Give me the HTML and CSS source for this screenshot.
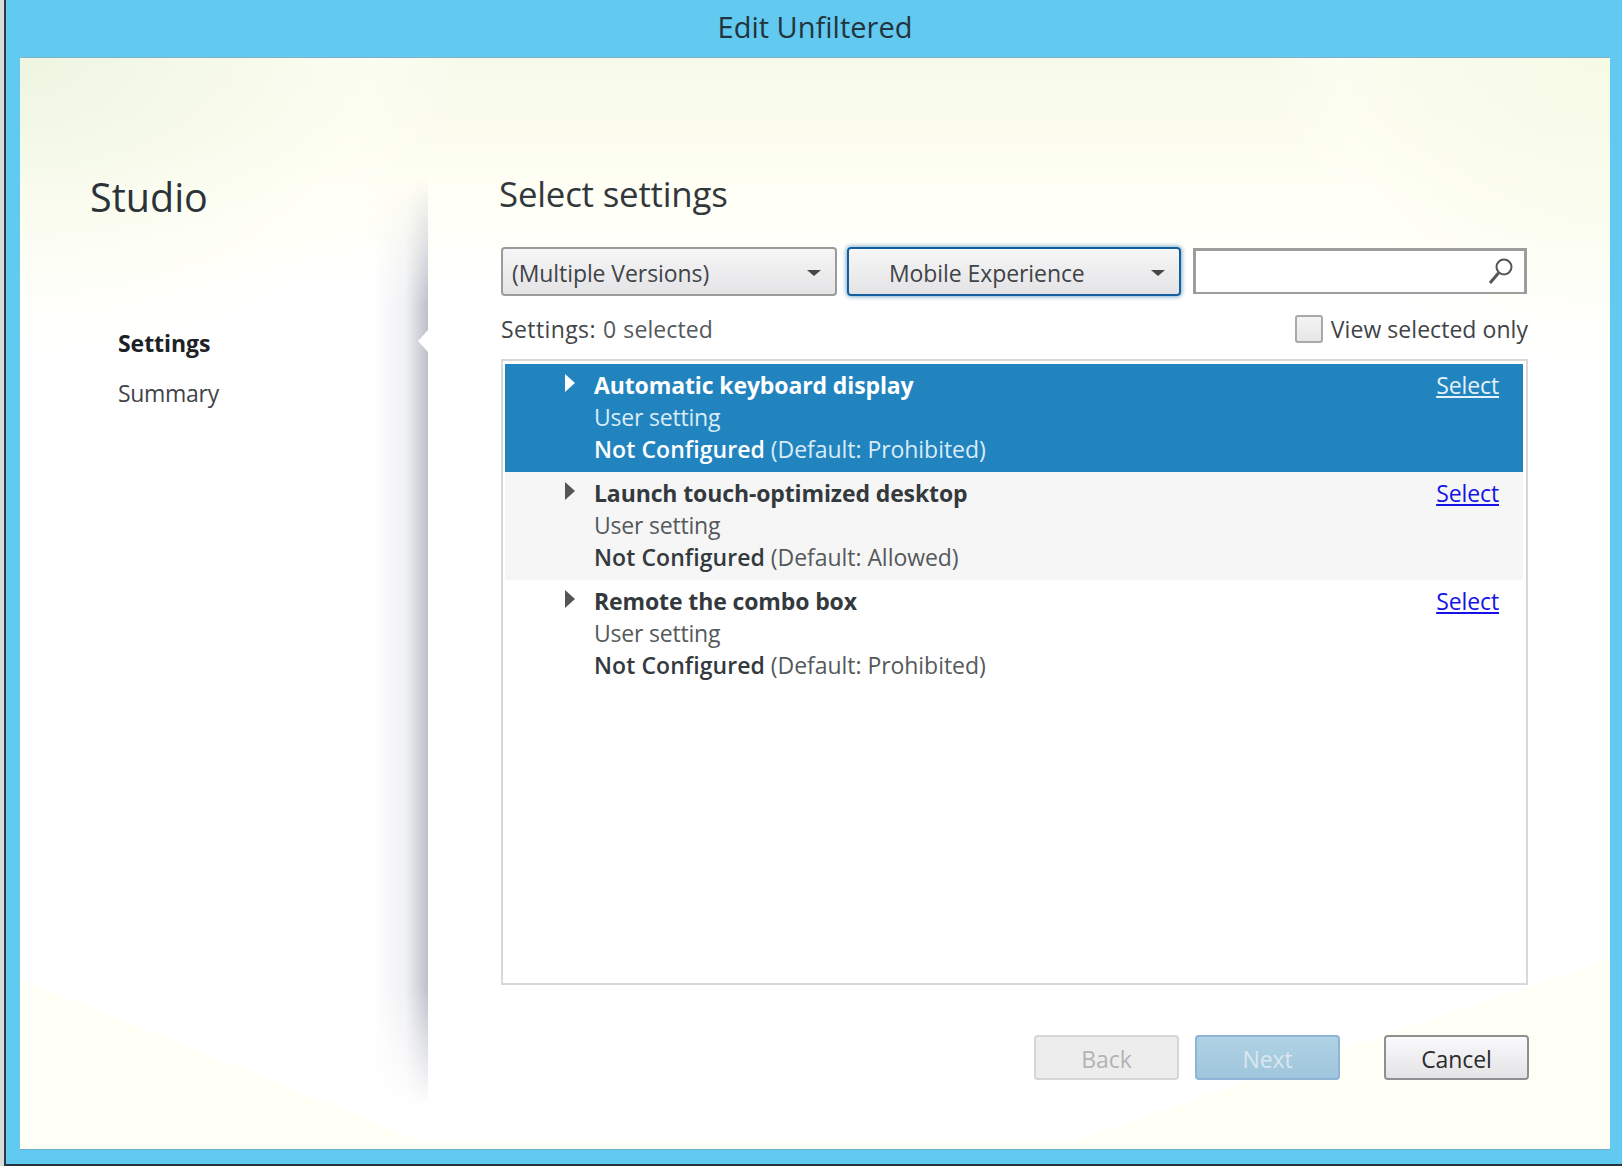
FILE: index.html
```html
<!DOCTYPE html>
<html lang="en">
  <head>
    <meta charset="UTF-8" />
    <title>Edit Unfiltered</title>
    <link rel="stylesheet" href="styles.css">
  </head>
  <body>
    <div class="window">
      <!-- Title bar -->
      <div class="title-bar">Edit Unfiltered</div>

      <div class="client">
        <!-- Left navigation -->
        <div class="sidebar">
          <h1>Studio</h1>
          <div class="nav-item active">Settings</div>
          <div class="nav-item">Summary</div>
          <div class="sidebar-shadow"></div>
          <div class="sidebar-notch"></div>
        </div>

        <!-- Wizard page -->
        <div class="page">
          <h2>Select settings</h2>

          <div class="filters">
            <div class="combo combo-version">
              <span>(Multiple Versions)</span>
              <i class="caret"></i>
            </div>
            <div class="combo combo-category">
              <span>Mobile Experience</span>
              <i class="caret"></i>
            </div>
            <div class="search">
              <svg width="30" height="30" viewBox="0 0 30 30">
                <circle cx="18" cy="11" r="7.5" fill="none" stroke="#555" stroke-width="2" />
                <path d="M12.5 17 L4 27" stroke="#555" stroke-width="3" fill="none" />
              </svg>
            </div>
          </div>

          <div class="status-row">
            <div class="count"><span class="count-label">Settings:</span> 0 selected</div>
            <label class="view-only"><span class="checkbox"></span>View selected only</label>
          </div>

          <div class="list">
            <div class="row selected">
              <i class="expander"></i>
              <div class="row-text">
                <div class="row-title">Automatic keyboard display</div>
                <div>User setting</div>
                <div class="row-value"><span class="row-state">Not Configured</span> (Default: Prohibited)</div>
              </div>
              <a class="select-link" href="#">Select</a>
            </div>
            <div class="row striped">
              <i class="expander"></i>
              <div class="row-text">
                <div class="row-title">Launch touch-optimized desktop</div>
                <div>User setting</div>
                <div class="row-value"><span class="row-state">Not Configured</span> (Default: Allowed)</div>
              </div>
              <a class="select-link" href="#">Select</a>
            </div>
            <div class="row">
              <i class="expander"></i>
              <div class="row-text">
                <div class="row-title">Remote the combo box</div>
                <div>User setting</div>
                <div class="row-value"><span class="row-state">Not Configured</span> (Default: Prohibited)</div>
              </div>
              <a class="select-link" href="#">Select</a>
            </div>
          </div>

          <div class="buttons">
            <button class="btn btn-back">Back</button>
            <button class="btn btn-next">Next</button>
            <button class="btn btn-cancel">Cancel</button>
          </div>
        </div>
      </div>
    </div>
  </body>
</html>
```

FILE: styles.css
```css
* {
  margin: 0;
  padding: 0;
  box-sizing: border-box;
}

html,
body {
  height: 100%;
}

body {
  font-family: "Open Sans", "Noto Sans", sans-serif;
  background: #d9dadc;
  padding-left: 4px;
  overflow: hidden;
  color: #3a3a3a;
}

.window {
  height: 1166px;
  display: flex;
  flex-direction: column;
  background: #62c9f0;
  border-left: 2px solid #2e3a40;
  border-bottom: 2px solid #24323a;
  padding: 0 12px 14px 14px;
}

/* Title bar */
.title-bar {
  height: 57px;
  flex: none;
  text-align: center;
  font-size: 29px;
  line-height: 54px;
  color: #23343c;
}

.client {
  flex: 1;
  display: flex;
  min-height: 0;
  border-top: 1px solid #7fb0c6;
  border-bottom: 1px solid #6eaccb;
  background-color: #fff;
  background-image:
    linear-gradient(to top right, #fffff6 50%, transparent 50.2%),
    linear-gradient(to top left, #fffff6 50%, transparent 50.2%),
    linear-gradient(to top, #fffff6 0, #fffff6 6px, transparent 7px),
    radial-gradient(ellipse 440px 300px at 0 0, rgba(236, 245, 224, 0.9) 0, rgba(246, 250, 234, 0.6) 50%, rgba(255, 255, 245, 0.6) 80%, rgba(255, 255, 245, 0) 100%),
    radial-gradient(ellipse 340px 310px at 100% 0, rgba(245, 250, 228, 0.8) 0, rgba(250, 252, 236, 0.6) 55%, rgba(255, 255, 245, 0.6) 80%, rgba(255, 255, 245, 0) 100%),
    linear-gradient(to bottom, #f7faeb 0, #fbfcee 70px, #fffff5 130px, #fffff8 170px, #fff 225px);
  background-size: 420px 170px, 560px 190px, 100% 100%, 100% 100%, 100% 100%, 100% 100%;
  background-position: 0 100%, 100% 100%, 0 0, 0 0, 0 0, 0 0;
  background-repeat: no-repeat;
}

/* Left navigation */
.sidebar {
  position: relative;
  width: 408px;
  flex: none;
  padding: 113px 0 0 70px;
}

.sidebar h1 {
  font-size: 39.5px;
  font-weight: 400;
  line-height: 52px;
  color: #2b3338;
  margin-bottom: 95px;
}

.nav-item {
  margin-left: 28px;
  font-size: 23px;
  line-height: 50px;
  color: #3f4448;
  letter-spacing: -0.3px;
}

.nav-item.active {
  font-weight: 700;
  color: #1c2226;
  letter-spacing: -0.05px;
}

.sidebar-shadow {
  position: absolute;
  top: 118px;
  right: 0;
  bottom: 42px;
  width: 56px;
  background: linear-gradient(to right, rgba(170, 175, 190, 0), rgba(170, 175, 190, 0.18) 60%, #bcc0c9 100%);
  -webkit-mask-image: linear-gradient(to bottom, transparent 0, #000 130px, #000 calc(100% - 120px), transparent 100%);
  mask-image: linear-gradient(to bottom, transparent 0, #000 130px, #000 calc(100% - 120px), transparent 100%);
}

.sidebar-notch {
  position: absolute;
  top: 272px;
  right: 0;
  border-top: 11px solid transparent;
  border-bottom: 11px solid transparent;
  border-right: 10px solid #fff;
}

/* Wizard page */
.page {
  flex: 1;
  padding: 0 82px 0 73px;
  display: flex;
  flex-direction: column;
}

.page h2 {
  margin-top: 111px;
  margin-left: -2px;
  font-size: 34.8px;
  font-weight: 400;
  line-height: 50px;
  color: #31383c;
  letter-spacing: -0.2px;
}

.filters {
  display: flex;
  margin-top: 28px;
  align-items: center;
}

.combo {
  height: 49px;
  display: flex;
  align-items: center;
  border: 2px solid #9b9b9b;
  border-radius: 4px;
  padding-top: 2px;
  background: linear-gradient(to bottom, #f6f6f7, #e4e4e6);
  font-size: 23px;
  color: #3f4448;
  letter-spacing: -0.08px;
  position: relative;
}

.combo-version {
  width: 336px;
  padding-left: 9px;
}

.combo-category {
  width: 334px;
  margin-left: 10px;
  padding-left: 40px;
  border-color: #14609f;
  box-shadow: 0 0 4px 1px #7eaecb;
}

.caret {
  position: absolute;
  right: 14px;
  top: 21px;
  border-left: 7px solid transparent;
  border-right: 7px solid transparent;
  border-top: 6px solid #454545;
}

.search {
  width: 334px;
  height: 46px;
  margin-left: 12px;
  margin-bottom: 2px;
  display: flex;
  align-items: center;
  justify-content: flex-end;
  padding-right: 8px;
  border: 3px solid #9d9d9d;
  border-bottom-width: 2px;
  background: #fff;
}

.status-row {
  display: flex;
  justify-content: space-between;
  align-items: center;
  height: 63px;
  padding-top: 2px;
  font-size: 23px;
  color: #54595c;
  letter-spacing: 0.1px;
  word-spacing: 1px;
}

.count-label {
  color: #3f4448;
  letter-spacing: 0.4px;
}

.view-only {
  display: flex;
  align-items: center;
  color: #3f4448;
  letter-spacing: 0.05px;
  word-spacing: 0;
}

.checkbox {
  width: 28px;
  height: 28px;
  margin-right: 8px;
  border: 2px solid #a9a9a9;
  border-radius: 3px;
  background: linear-gradient(to bottom, #f4f4f5, #e6e6e8);
}

.list {
  height: 626px;
  padding: 3px 3px 0 2px;
  border: 2px solid #d8d8d8;
  background: #fff;
  font-size: 23px;
  line-height: 32px;
  letter-spacing: -0.2px;
  color: #54595c;
}

.row {
  height: 108px;
  display: flex;
  padding: 5px 24px 0 60px;
}

.row.selected {
  background: #2284bf;
  color: #d9ecf7;
}

.row.striped {
  background: #f6f6f6;
}

.expander {
  flex: none;
  margin-top: 5px;
  border-top: 9px solid transparent;
  border-bottom: 9px solid transparent;
  border-left: 10px solid #555;
  height: 18px;
  margin-right: 19px;
}

.selected .expander {
  border-left-color: #fff;
}

.row-text {
  flex: 1;
}

.row-title {
  font-weight: 700;
  letter-spacing: -0.12px;
  color: #33393d;
}

.row-value {
  letter-spacing: -0.05px;
}

.row-state {
  font-weight: 600;
  letter-spacing: 0.07px;
  color: #33393d;
}

.selected .row-title,
.selected .row-state {
  color: #fff;
}

.select-link {
  color: #1414e6;
  letter-spacing: -0.1px;
}

.selected .select-link {
  color: #e4f2fa;
}

/* Buttons */
.buttons {
  display: flex;
  margin-top: 50px;
  justify-content: flex-end;
  margin-right: -1px;
}

.btn {
  width: 145px;
  height: 45px;
  padding-top: 2px;
  border-radius: 4px;
  font-family: inherit;
  font-size: 23px;
  letter-spacing: -0.1px;
  border: 2px solid #8f8f8f;
  color: #2b2b2b;
  background: linear-gradient(to bottom, #fafafb, #e3e3e7);
}

.btn-back {
  margin-right: 16px;
  border-color: #d6d6d6;
  background: #ededee;
  color: #b3b3b3;
}

.btn-next {
  margin-right: 44px;
  border-color: #8eb5d6;
  background: linear-gradient(to bottom, #b0d2e4, #9fc6dd);
  color: #dbe7ed;
}
```
